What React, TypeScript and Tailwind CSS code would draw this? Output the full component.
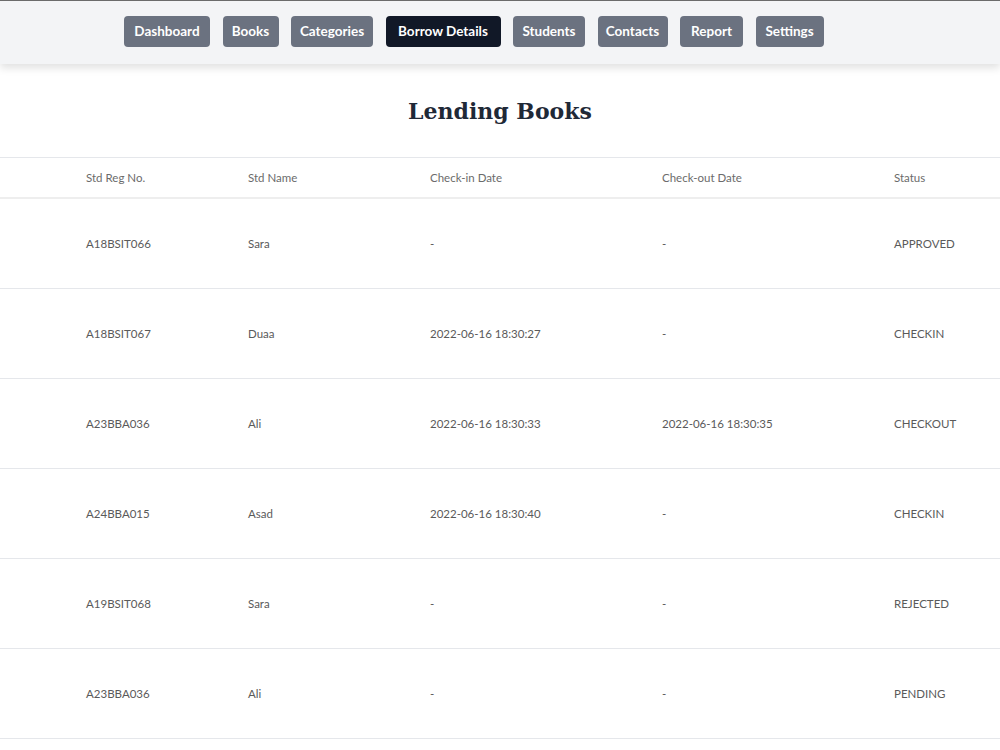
import React from "react";

const navItems: [string, string][] = [
  ["Dashboard", "w-[86px]"],
  ["Books", "w-[56px]"],
  ["Categories", "w-[82px]"],
  ["Borrow Details", "w-[115px]"],
  ["Students", "w-[72px]"],
  ["Contacts", "w-[70px]"],
  ["Report", "w-[63px]"],
  ["Settings", "w-[68px]"],
];

const rows = [
  ["A18BSIT066", "Sara", "-", "-", "APPROVED"],
  ["A18BSIT067", "Duaa", "2022-06-16 18:30:27", "-", "CHECKIN"],
  ["A23BBA036", "Ali", "2022-06-16 18:30:33", "2022-06-16 18:30:35", "CHECKOUT"],
  ["A24BBA015", "Asad", "2022-06-16 18:30:40", "-", "CHECKIN"],
  ["A19BSIT068", "Sara", "-", "-", "REJECTED"],
  ["A23BBA036", "Ali", "-", "-", "PENDING"],
];

const cols = "grid grid-cols-[162px_182px_232px_232px_1fr] pl-[86px]";

export default function App() {
  return (
    <div className="min-h-[750px] bg-white" style={{ fontFamily: "Lato, 'Open Sans', sans-serif" }}>
      <nav className="relative z-10 h-[64px] bg-[#f3f4f6] border-t border-[#6b6b6b] shadow-[0_4px_8px_rgba(0,0,0,0.12)] flex items-center pl-[124px] gap-[12.5px]">
        {navItems.map(([n, w]) => (
          <button
            key={n}
            className={`${w} h-[31px] -mt-[2px] flex items-center justify-center rounded-[4px] text-[13.5px] font-bold text-white ${
              n === "Borrow Details" ? "bg-[#111827]" : "bg-[#6b7280]"
            }`}
          >
            {n}
          </button>
        ))}
      </nav>
      <h1
        className="text-center text-[22px] font-bold text-[#1f2937] pt-[31px] pb-[30px] leading-[32px]"
        style={{ fontFamily: "'DejaVu Serif', Georgia, serif" }}
      >
        Lending Books
      </h1>
      <div className="border-t border-[#e5e7eb] text-[11.5px] text-[#6b6b6b]">
        <div className={`${cols} h-[41px] items-center border-b-2 border-[#eeeeee]`}>
          <div>Std Reg No.</div>
          <div>Std Name</div>
          <div>Check-in Date</div>
          <div>Check-out Date</div>
          <div>Status</div>
        </div>
        {rows.map((r, i) => (
          <div key={i} className={`${cols} h-[90px] items-center border-b border-[#e5e7eb] text-[#5a5a5a]`}>
            {r.map((c, j) => (
              <div key={j}>{c}</div>
            ))}
          </div>
        ))}
      </div>
    </div>
  );
}
